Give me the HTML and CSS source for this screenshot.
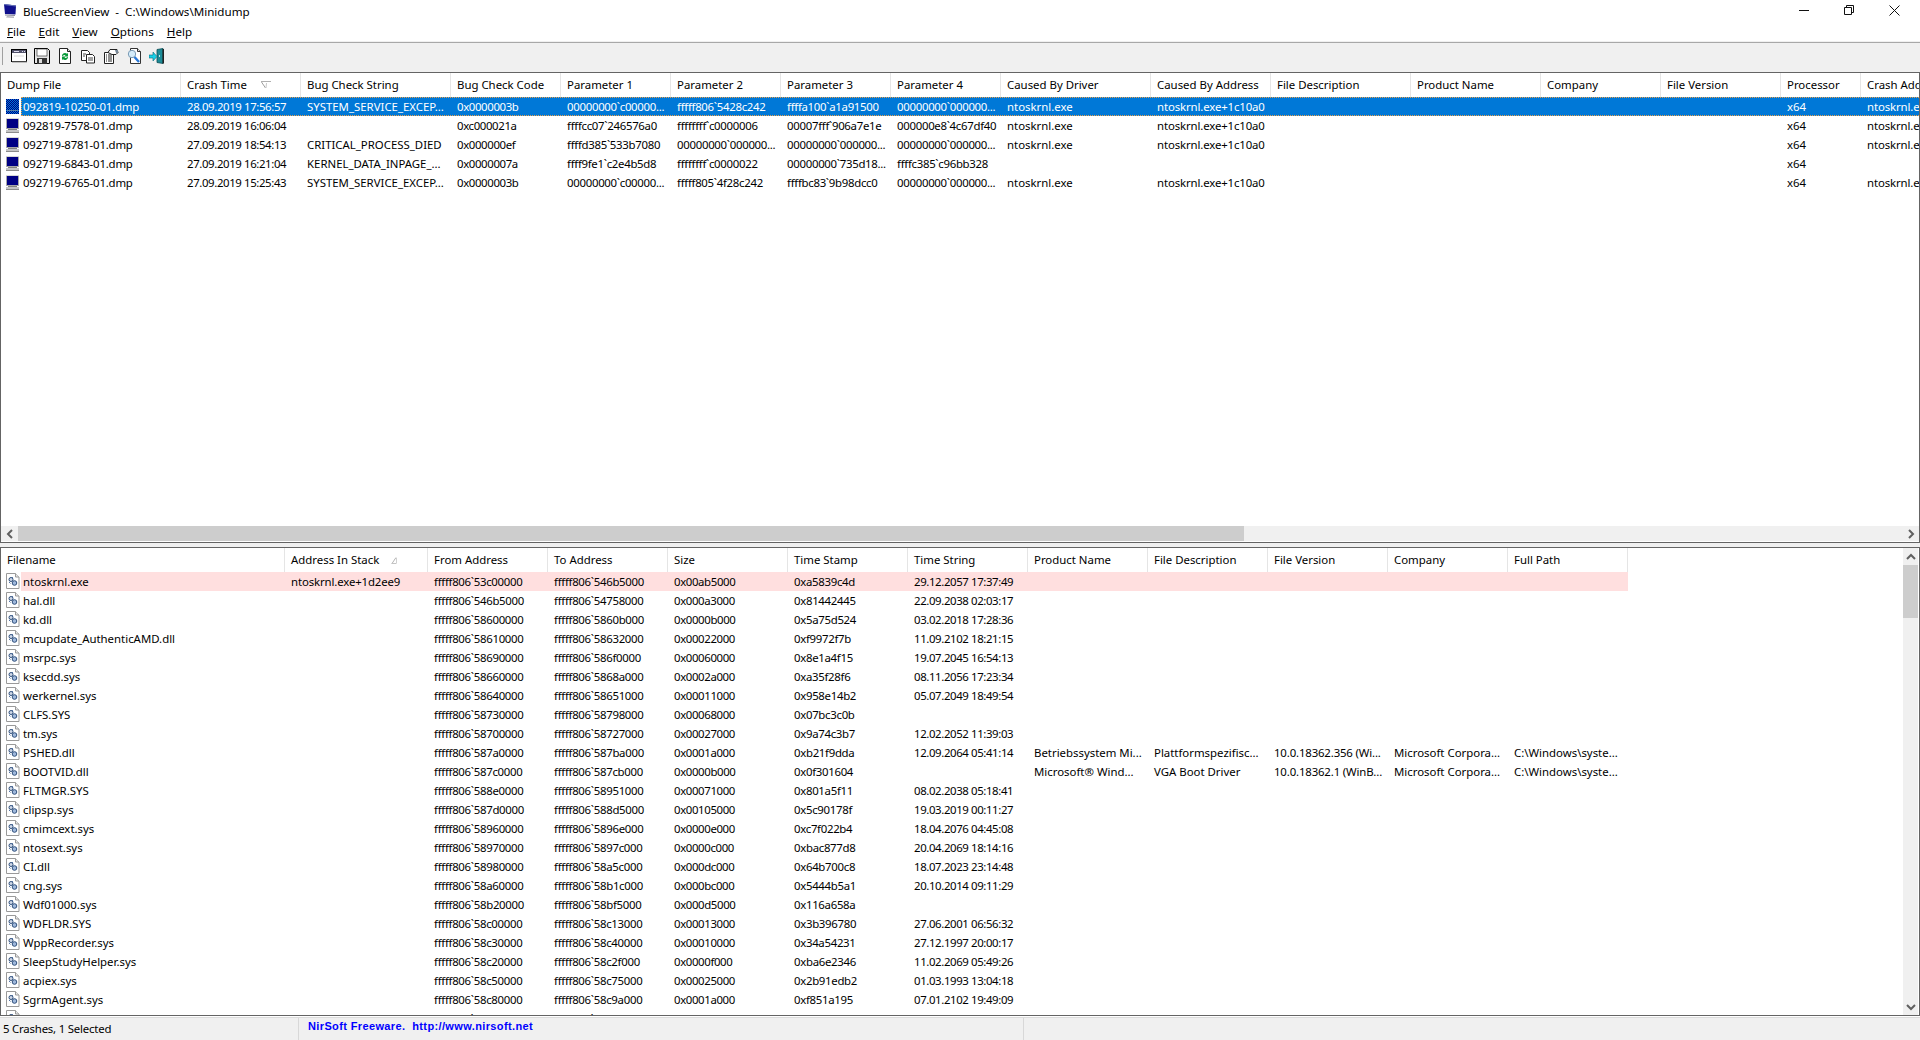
FILE: index.html
```html
<!DOCTYPE html>
<html lang="en">
<head>
<meta charset="utf-8">
<title>BlueScreenView</title>
<link rel="stylesheet" href="styles.css">
</head>
<body>
<svg class="defs" aria-hidden="true">
  <defs>
    <pattern id="dither" width="2" height="2" patternUnits="userSpaceOnUse">
      <rect width="2" height="2" fill="#0078d7"/>
      <rect width="1" height="1" fill="#000080"/>
      <rect x="1" y="1" width="1" height="1" fill="#000080"/>
    </pattern>
    <symbol id="monitor" viewBox="0 0 16 16">
      <rect x="1" y="1" width="13" height="11" fill="#a8a8a8"/>
      <rect x="2" y="2" width="11" height="9" fill="#000084"/>
      <rect x="1" y="1" width="13" height="1" fill="#d8d8d8"/>
      <rect x="3" y="12" width="9" height="1" fill="#808080"/>
      <rect x="1" y="13" width="13" height="2" fill="#c4c4c4"/>
      <rect x="1" y="15" width="13" height="1" fill="#8c8c8c"/>
    </symbol>
    <symbol id="monitor-sel" viewBox="0 0 16 16">
      <rect x="1" y="1" width="13" height="15" fill="url(#dither)"/>
      <rect x="2" y="12" width="11" height="1" fill="#5a7fa8"/>
    </symbol>
    <symbol id="module" viewBox="0 0 14 16">
      <path d="M.5.5h9l3.5 3.5v11.500h-12.500z" fill="#fff" stroke="#9a9a9a"/>
      <path d="M9.500.5v3.500h3.500" fill="#e8e8e8" stroke="#9a9a9a"/>
      <circle cx="5" cy="6.500" r="2" fill="#cfd8e8" stroke="#30507c"/>
      <circle cx="8.500" cy="10" r="2.300" fill="#9fb8dc" stroke="#30507c"/>
      <path d="M3 9l1.500 1.500M6 4l1 1" stroke="#5878a8"/>
    </symbol>
  </defs>
</svg>

<header class="titlebar">
  <svg class="app-icon" viewBox="0 0 14 15" width="14" height="15"><path d="M1 0l12 1.500-.5 9-10.500-.5z" fill="#10108c"/><path d="M1 0l12 1.500v1l-12-1.500z" fill="#6a78b8"/><path d="M2 10.500l10 .5v1l-10-.5z" fill="#8a8a9a"/><path d="M4 12l7 .5v1.500l-8-.5z" fill="#b4b4bc"/></svg>
  <span class="title-text">BlueScreenView&nbsp; -&nbsp; C:\Windows\Minidump</span>
  <div class="win-btns">
    <svg width="10" height="10" viewBox="0 0 10 10"><path d="M0 5.500h10" stroke="#111"/></svg>
    <svg width="10" height="10" viewBox="0 0 10 10"><path d="M.5 2.500h7v7h-7zM2.500 2.500v-2h7v7h-2" fill="none" stroke="#111"/></svg>
    <svg width="11" height="11" viewBox="0 0 11 11"><path d="M.5.5l10 10M10.500.5l-10 10" stroke="#111"/></svg>
  </div>
</header>

<nav class="menubar">
  <span class="menu-item"><u>F</u>ile</span>
  <span class="menu-item"><u>E</u>dit</span>
  <span class="menu-item"><u>V</u>iew</span>
  <span class="menu-item"><u>O</u>ptions</span>
  <span class="menu-item"><u>H</u>elp</span>
</nav>

<div class="toolbar">
  <span class="gripper"></span>
  <svg class="tool" viewBox="0 0 16 16"><rect x=".5" y="1.500" width="15" height="12" fill="#fff" stroke="#000"/><rect x="1" y="2" width="14" height="3" fill="#54546c"/><path d="M3 3.500h5M11 3.500h1M13 3.500h1" stroke="#dcdcf0"/><path d="M1 13.500h15v1h-15z" fill="#8a8a8a"/><path d="M3 8h10" stroke="#d8d8d8"/></svg>
  <svg class="tool" viewBox="0 0 16 16"><path d="M.5.500h13l2 2v13h-15z" fill="#e4e4e4" stroke="#000"/><rect x="3" y="1" width="10" height="7" fill="#fff" stroke="#222" stroke-width=".6"/><rect x="3" y="10" width="10" height="6" fill="#333"/><rect x="5" y="11" width="3" height="4" fill="#ddd"/></svg>
  <svg class="tool" viewBox="0 0 16 16"><path d="M2.500.500h8l3 3v12h-11z" fill="#fff" stroke="#222"/><path d="M10.500.500v3h3" fill="#ddd" stroke="#222"/><path d="M5 8a3 3 0 0 1 5-2.200l1-.8v3.500h-3.500l1-1a1.800 1.800 0 0 0-2.600.5z" fill="#0a9a3a"/><path d="M11 9a3 3 0 0 1-5 2.200l-1 .8v-3.500h3.500l-1 1a1.800 1.800 0 0 0 2.600-.5z" fill="#0a9a3a"/></svg>
  <svg class="tool" viewBox="0 0 16 16"><path d="M1.500 2.500h6l2 2v8h-8z" fill="#fff" stroke="#222"/><path d="M6.500 6.500h6l2 2v6.500h-8z" fill="#fff" stroke="#222"/><path d="M3 6h3M3 8h2M8 10h5M8 12h5" stroke="#444"/></svg>
  <svg class="tool" viewBox="0 0 16 16"><path d="M1.500 4.500h9v11h-9z" fill="#fff" stroke="#222"/><path d="M3 7h1M5 7h4M3 9h1M5 9h4M3 11h1M5 11h4M3 13h1M5 13h4" stroke="#222"/><path d="M5 4.500l2-3h7l1 3-2 2h-4z" fill="#fff" stroke="#222"/><path d="M12 2h3v3h-2z" fill="#789"/></svg>
  <svg class="tool" viewBox="0 0 16 16"><path d="M4.500.500h7l3 3v12h-10z" fill="#fff" stroke="#333"/><path d="M11.500.500v3h3" fill="#ddd" stroke="#333"/><circle cx="6" cy="6" r="3.700" fill="#d4ecfa" stroke="#7a9ab4"/><path d="M8.500 9l4.500 5" stroke="#2878d8" stroke-width="2.400"/></svg>
  <svg class="tool" viewBox="0 0 16 16"><path d="M8 1.500l6 -1v15l-6-1z" fill="#1c8c98" stroke="#0c4c54" stroke-width=".8"/><path d="M13.500 1h1.500v14.500h-1.500z" fill="#222"/><path d="M0 7h4v-3l4 4.500-4 4.500v-3h-4z" fill="#18d0e8" stroke="#0a6a78" stroke-width=".6"/><rect x="10" y="7" width="1" height="2" fill="#c8e8e8"/></svg>
</div>

<section class="list list-upper">
  <div class="upper-view">
    <div class="head">
      <span class="hc">Dump File</span>
      <span class="hc">Crash Time<svg class="sort-down" width="10" height="8" viewBox="0 0 10 8"><path d="M0 .5h10" stroke="#b0b0b0"/><path d="M.5 1l4 6" stroke="#a0a0a0"/><path d="M5 7l.5-5" stroke="#c8c8c8"/></svg></span>
      <span class="hc">Bug Check String</span>
      <span class="hc">Bug Check Code</span>
      <span class="hc">Parameter 1</span>
      <span class="hc">Parameter 2</span>
      <span class="hc">Parameter 3</span>
      <span class="hc">Parameter 4</span>
      <span class="hc">Caused By Driver</span>
      <span class="hc">Caused By Address</span>
      <span class="hc">File Description</span>
      <span class="hc">Product Name</span>
      <span class="hc">Company</span>
      <span class="hc">File Version</span>
      <span class="hc">Processor</span>
      <span class="hc">Crash Address</span>
    </div>
    <div class="row selected">
      <svg class="ri"><use href="#monitor-sel"/></svg>
      <div class="cells"><span>092819-10250-01.dmp</span><span>28.09.2019 17:56:57</span><span>SYSTEM_SERVICE_EXCEP...</span><span>0x0000003b</span><span>00000000`c00000...</span><span>fffff806`5428c242</span><span>ffffa100`a1a91500</span><span>00000000`000000...</span><span>ntoskrnl.exe</span><span>ntoskrnl.exe+1c10a0</span><span></span><span></span><span></span><span></span><span>x64</span><span>ntoskrnl.exe+1c10a0</span></div>
    </div>
    <div class="row">
      <svg class="ri"><use href="#monitor"/></svg>
      <div class="cells"><span>092819-7578-01.dmp</span><span>28.09.2019 16:06:04</span><span></span><span>0xc000021a</span><span>ffffcc07`246576a0</span><span>ffffffff`c0000006</span><span>00007fff`906a7e1e</span><span>000000e8`4c67df40</span><span>ntoskrnl.exe</span><span>ntoskrnl.exe+1c10a0</span><span></span><span></span><span></span><span></span><span>x64</span><span>ntoskrnl.exe+1c10a0</span></div>
    </div>
    <div class="row">
      <svg class="ri"><use href="#monitor"/></svg>
      <div class="cells"><span>092719-8781-01.dmp</span><span>27.09.2019 18:54:13</span><span>CRITICAL_PROCESS_DIED</span><span>0x000000ef</span><span>ffffd385`533b7080</span><span>00000000`000000...</span><span>00000000`000000...</span><span>00000000`000000...</span><span>ntoskrnl.exe</span><span>ntoskrnl.exe+1c10a0</span><span></span><span></span><span></span><span></span><span>x64</span><span>ntoskrnl.exe+1c10a0</span></div>
    </div>
    <div class="row">
      <svg class="ri"><use href="#monitor"/></svg>
      <div class="cells"><span>092719-6843-01.dmp</span><span>27.09.2019 16:21:04</span><span>KERNEL_DATA_INPAGE_...</span><span>0x0000007a</span><span>ffff9fe1`c2e4b5d8</span><span>ffffffff`c0000022</span><span>00000000`735d18...</span><span>ffffc385`c96bb328</span><span></span><span></span><span></span><span></span><span></span><span></span><span>x64</span><span></span></div>
    </div>
    <div class="row">
      <svg class="ri"><use href="#monitor"/></svg>
      <div class="cells"><span>092719-6765-01.dmp</span><span>27.09.2019 15:25:43</span><span>SYSTEM_SERVICE_EXCEP...</span><span>0x0000003b</span><span>00000000`c00000...</span><span>fffff805`4f28c242</span><span>ffffbc83`9b98dcc0</span><span>00000000`000000...</span><span>ntoskrnl.exe</span><span>ntoskrnl.exe+1c10a0</span><span></span><span></span><span></span><span></span><span>x64</span><span>ntoskrnl.exe+1c10a0</span></div>
    </div>
  </div>
  <div class="hscroll">
    <span class="sb-btn"><svg width="8" height="10" viewBox="0 0 8 10"><path d="M6 1L2 5l4 4" fill="none" stroke="#606060" stroke-width="2"/></svg></span>
    <span class="hthumb"></span>
    <span class="sb-btn sb-end"><svg width="8" height="10" viewBox="0 0 8 10"><path d="M2 1l4 4-4 4" fill="none" stroke="#606060" stroke-width="2"/></svg></span>
  </div>
</section>

<div class="splitter"></div>

<section class="list list-lower">
  <div class="lower-view">
    <div class="head">
      <span class="hc">Filename</span>
      <span class="hc">Address In Stack<svg class="sort-up" width="6" height="7" viewBox="0 0 6 7"><path d="M5 .5l-4 6" stroke="#b4b4b4"/><path d="M.5 6.500h5" stroke="#c4c4c4"/><path d="M5.500 1v5" stroke="#d0d0d0"/></svg></span>
      <span class="hc">From Address</span>
      <span class="hc">To Address</span>
      <span class="hc">Size</span>
      <span class="hc">Time Stamp</span>
      <span class="hc">Time String</span>
      <span class="hc">Product Name</span>
      <span class="hc">File Description</span>
      <span class="hc">File Version</span>
      <span class="hc">Company</span>
      <span class="hc">Full Path</span>
    </div>
    <div class="row highlight"><svg class="ri"><use href="#module"/></svg><div class="cells"><span>ntoskrnl.exe</span><span>ntoskrnl.exe+1d2ee9</span><span>fffff806`53c00000</span><span>fffff806`546b5000</span><span>0x00ab5000</span><span>0xa5839c4d</span><span>29.12.2057 17:37:49</span><span></span><span></span><span></span><span></span><span></span></div></div>
    <div class="row"><svg class="ri"><use href="#module"/></svg><div class="cells"><span>hal.dll</span><span></span><span>fffff806`546b5000</span><span>fffff806`54758000</span><span>0x000a3000</span><span>0x81442445</span><span>22.09.2038 02:03:17</span></div></div>
    <div class="row"><svg class="ri"><use href="#module"/></svg><div class="cells"><span>kd.dll</span><span></span><span>fffff806`58600000</span><span>fffff806`5860b000</span><span>0x0000b000</span><span>0x5a75d524</span><span>03.02.2018 17:28:36</span></div></div>
    <div class="row"><svg class="ri"><use href="#module"/></svg><div class="cells"><span>mcupdate_AuthenticAMD.dll</span><span></span><span>fffff806`58610000</span><span>fffff806`58632000</span><span>0x00022000</span><span>0xf9972f7b</span><span>11.09.2102 18:21:15</span></div></div>
    <div class="row"><svg class="ri"><use href="#module"/></svg><div class="cells"><span>msrpc.sys</span><span></span><span>fffff806`58690000</span><span>fffff806`586f0000</span><span>0x00060000</span><span>0x8e1a4f15</span><span>19.07.2045 16:54:13</span></div></div>
    <div class="row"><svg class="ri"><use href="#module"/></svg><div class="cells"><span>ksecdd.sys</span><span></span><span>fffff806`58660000</span><span>fffff806`5868a000</span><span>0x0002a000</span><span>0xa35f28f6</span><span>08.11.2056 17:23:34</span></div></div>
    <div class="row"><svg class="ri"><use href="#module"/></svg><div class="cells"><span>werkernel.sys</span><span></span><span>fffff806`58640000</span><span>fffff806`58651000</span><span>0x00011000</span><span>0x958e14b2</span><span>05.07.2049 18:49:54</span></div></div>
    <div class="row"><svg class="ri"><use href="#module"/></svg><div class="cells"><span>CLFS.SYS</span><span></span><span>fffff806`58730000</span><span>fffff806`58798000</span><span>0x00068000</span><span>0x07bc3c0b</span><span></span></div></div>
    <div class="row"><svg class="ri"><use href="#module"/></svg><div class="cells"><span>tm.sys</span><span></span><span>fffff806`58700000</span><span>fffff806`58727000</span><span>0x00027000</span><span>0x9a74c3b7</span><span>12.02.2052 11:39:03</span></div></div>
    <div class="row"><svg class="ri"><use href="#module"/></svg><div class="cells"><span>PSHED.dll</span><span></span><span>fffff806`587a0000</span><span>fffff806`587ba000</span><span>0x0001a000</span><span>0xb21f9dda</span><span>12.09.2064 05:41:14</span><span>Betriebssystem Mi...</span><span>Plattformspezifisc...</span><span>10.0.18362.356 (Wi...</span><span>Microsoft Corpora...</span><span>C:\Windows\syste...</span></div></div>
    <div class="row"><svg class="ri"><use href="#module"/></svg><div class="cells"><span>BOOTVID.dll</span><span></span><span>fffff806`587c0000</span><span>fffff806`587cb000</span><span>0x0000b000</span><span>0x0f301604</span><span></span><span>Microsoft® Wind...</span><span>VGA Boot Driver</span><span>10.0.18362.1 (WinB...</span><span>Microsoft Corpora...</span><span>C:\Windows\syste...</span></div></div>
    <div class="row"><svg class="ri"><use href="#module"/></svg><div class="cells"><span>FLTMGR.SYS</span><span></span><span>fffff806`588e0000</span><span>fffff806`58951000</span><span>0x00071000</span><span>0x801a5f11</span><span>08.02.2038 05:18:41</span></div></div>
    <div class="row"><svg class="ri"><use href="#module"/></svg><div class="cells"><span>clipsp.sys</span><span></span><span>fffff806`587d0000</span><span>fffff806`588d5000</span><span>0x00105000</span><span>0x5c90178f</span><span>19.03.2019 00:11:27</span></div></div>
    <div class="row"><svg class="ri"><use href="#module"/></svg><div class="cells"><span>cmimcext.sys</span><span></span><span>fffff806`58960000</span><span>fffff806`5896e000</span><span>0x0000e000</span><span>0xc7f022b4</span><span>18.04.2076 04:45:08</span></div></div>
    <div class="row"><svg class="ri"><use href="#module"/></svg><div class="cells"><span>ntosext.sys</span><span></span><span>fffff806`58970000</span><span>fffff806`5897c000</span><span>0x0000c000</span><span>0xbac877d8</span><span>20.04.2069 18:14:16</span></div></div>
    <div class="row"><svg class="ri"><use href="#module"/></svg><div class="cells"><span>CI.dll</span><span></span><span>fffff806`58980000</span><span>fffff806`58a5c000</span><span>0x000dc000</span><span>0x64b700c8</span><span>18.07.2023 23:14:48</span></div></div>
    <div class="row"><svg class="ri"><use href="#module"/></svg><div class="cells"><span>cng.sys</span><span></span><span>fffff806`58a60000</span><span>fffff806`58b1c000</span><span>0x000bc000</span><span>0x5444b5a1</span><span>20.10.2014 09:11:29</span></div></div>
    <div class="row"><svg class="ri"><use href="#module"/></svg><div class="cells"><span>Wdf01000.sys</span><span></span><span>fffff806`58b20000</span><span>fffff806`58bf5000</span><span>0x000d5000</span><span>0x116a658a</span><span></span></div></div>
    <div class="row"><svg class="ri"><use href="#module"/></svg><div class="cells"><span>WDFLDR.SYS</span><span></span><span>fffff806`58c00000</span><span>fffff806`58c13000</span><span>0x00013000</span><span>0x3b396780</span><span>27.06.2001 06:56:32</span></div></div>
    <div class="row"><svg class="ri"><use href="#module"/></svg><div class="cells"><span>WppRecorder.sys</span><span></span><span>fffff806`58c30000</span><span>fffff806`58c40000</span><span>0x00010000</span><span>0x34a54231</span><span>27.12.1997 20:00:17</span></div></div>
    <div class="row"><svg class="ri"><use href="#module"/></svg><div class="cells"><span>SleepStudyHelper.sys</span><span></span><span>fffff806`58c20000</span><span>fffff806`58c2f000</span><span>0x0000f000</span><span>0xba6e2346</span><span>11.02.2069 05:49:26</span></div></div>
    <div class="row"><svg class="ri"><use href="#module"/></svg><div class="cells"><span>acpiex.sys</span><span></span><span>fffff806`58c50000</span><span>fffff806`58c75000</span><span>0x00025000</span><span>0x2b91edb2</span><span>01.03.1993 13:04:18</span></div></div>
    <div class="row"><svg class="ri"><use href="#module"/></svg><div class="cells"><span>SgrmAgent.sys</span><span></span><span>fffff806`58c80000</span><span>fffff806`58c9a000</span><span>0x0001a000</span><span>0xf851a195</span><span>07.01.2102 19:49:09</span></div></div>
    <div class="row"><svg class="ri"><use href="#module"/></svg><div class="cells"><span>ACPI.sys</span><span></span><span>fffff806`58ca0000</span><span>fffff806`58d3a000</span><span>0x0009a000</span><span>0x8fb30f5f</span><span>10.10.2046 13:29:45</span></div></div>
  </div>
  <div class="vscroll">
    <span class="sb-btn"><svg width="10" height="8" viewBox="0 0 10 8"><path d="M1 6l4-4 4 4" fill="none" stroke="#606060" stroke-width="2"/></svg></span>
    <span class="vthumb"></span>
    <span class="sb-btn sb-end"><svg width="10" height="8" viewBox="0 0 10 8"><path d="M1 2l4 4 4-4" fill="none" stroke="#606060" stroke-width="2"/></svg></span>
  </div>
</section>

<footer class="statusbar">
  <span class="st-count">5 Crashes, 1 Selected</span>
  <span class="st-link">NirSoft Freeware.&nbsp; http://www.nirsoft.net</span>
  <span></span>
</footer>
</body>
</html>
```
FILE: styles.css
```css
* { box-sizing: border-box; }
html, body { margin: 0; padding: 0; }
body {
  width: 1920px;
  height: 1040px;
  overflow: hidden;
  display: flex;
  flex-direction: column;
  background: #fff;
  color: #000;
  font: 11.4px/16px "Noto Sans", "Open Sans", sans-serif;
}
.defs { width: 0; height: 0; position: absolute; }

.titlebar { height: 22px; display: flex; align-items: center; padding: 1px 0 0 3px; }
.title-text { margin-left: 6px; font-size: 11.6px; }
.win-btns { margin-left: auto; width: 121px; display: flex; justify-content: space-between; align-items: flex-start; padding-right: 20px; margin-top: -3px; }

.menubar { height: 21px; display: flex; align-items: center; padding-left: 7px; gap: 13px; border-bottom: 1px solid #a8a8a8; box-shadow: inset 0 -1px 0 #f0f0f0; }
.menu-item { font-size: 11.6px; }

.toolbar { height: 29px; background: #f0f0f0; display: flex; align-items: center; padding: 0 0 3px 2px; gap: 7px; }
.gripper { width: 1px; height: 18px; background: #a0a0a0; margin-right: 1px; }
.tool { width: 16px; height: 16px; flex: none; }

.list { border: 1px solid #646464; flex: none; background: #fff; }
.list-upper { height: 471px; display: flex; flex-direction: column; }
.list-lower { height: 469px; display: flex; }
.upper-view { flex: 1; overflow: hidden; min-height: 0; }
.lower-view { flex: 1; overflow: hidden; min-width: 0; }
.splitter { height: 4px; background: #f0f0f0; flex: none; }

.head { display: grid; height: 24px; width: max-content; }
.hc { display: flex; align-items: center; padding-left: 6px; border-right: 1px solid #e5e5e5; white-space: nowrap; overflow: hidden; }
.list-upper .head { grid-template-columns: 180px 120px 150px 110px 110px 110px 110px 110px 150px 120px 140px 130px 120px 120px 80px 120px; }
.list-lower .head { grid-template-columns: 284px 143px repeat(10, 120px); }

.row { display: flex; height: 19px; width: max-content; }
.ri { width: 16px; height: 16px; margin: 1px 0 0 4px; flex: none; }
.list-lower .ri { width: 14px; height: 16px; margin: 1px 0 0 5px; }
.list-lower .row .cells { margin-left: 1px; }
.cells { display: grid; align-items: center; height: 19px; white-space: nowrap; }
.cells span { padding-left: 6px; overflow: hidden; min-width: 0; }
.cells span:first-child { padding-left: 2px; }
.list-upper .cells { grid-template-columns: 160px 120px 150px 110px 110px 110px 110px 110px 150px 120px 140px 130px 120px 120px 80px 120px; }
.list-lower .cells { grid-template-columns: 264px 143px repeat(10, 120px); }
.selected .cells { background: #0078d7; color: #fff; outline: 1px dotted #e8a04c; outline-offset: -1px; }
.highlight .cells { background: #ffdfdf; }

/* Segoe's digits are narrower than Noto's, so tighten the numeric columns */
.list-upper .cells span:nth-child(1) { letter-spacing: -.2px; }
.list-upper .cells span:nth-child(2) { letter-spacing: -.38px; }
.list-upper .cells span:nth-child(4) { letter-spacing: -.37px; }
.list-upper .cells span:nth-child(5),
.list-upper .cells span:nth-child(6),
.list-upper .cells span:nth-child(7),
.list-upper .cells span:nth-child(8) { letter-spacing: -.29px; }
.list-upper .cells span:nth-child(10),
.list-upper .cells span:nth-child(16) { letter-spacing: -.13px; }
.list-lower .cells span:nth-child(2) { letter-spacing: -.13px; }
.list-lower .cells span:nth-child(3),
.list-lower .cells span:nth-child(4) { letter-spacing: -.29px; }
.list-lower .cells span:nth-child(5) { letter-spacing: -.37px; }
.list-lower .cells span:nth-child(6) { letter-spacing: -.3px; }
.list-lower .cells span:nth-child(7) { letter-spacing: -.38px; }
.list-lower .cells span:nth-child(10) { letter-spacing: -.15px; }

.hscroll { height: 15px; margin-bottom: 1px; flex: none; display: flex; background: #f0f0f0; }
.sb-btn { display: flex; align-items: center; justify-content: center; flex: none; width: 17px; }
.hthumb { width: 1226px; background: #cdcdcd; }
.sb-end { margin-left: auto; }
.vscroll { width: 15px; margin-right: 1px; flex: none; display: flex; flex-direction: column; background: #f0f0f0; }
.vscroll .sb-btn { width: 15px; height: 17px; }
.vthumb { height: 53px; background: #cdcdcd; }
.vscroll .sb-end { margin-left: 0; margin-top: auto; }

.sort-down { margin-left: 14px; flex: none; }
.sort-up { margin-left: 12px; flex: none; }

.statusbar { height: 24px; flex: none; background: #f0f0f0; display: grid; grid-template-columns: 299px 725px 1fr; box-shadow: inset 0 1px 0 #fff, inset 0 2px 0 #dcdcdc; padding-top: 2px; }
.st-count { padding: 3px 0 0 3px; border-right: 1px solid #d8d8d8; letter-spacing: -.2px; }
.st-link { padding: 0 0 0 9px; color: #0000ff; font: bold 11px/16px "Liberation Sans", sans-serif; letter-spacing: .37px; border-right: 1px solid #d8d8d8; }
```
